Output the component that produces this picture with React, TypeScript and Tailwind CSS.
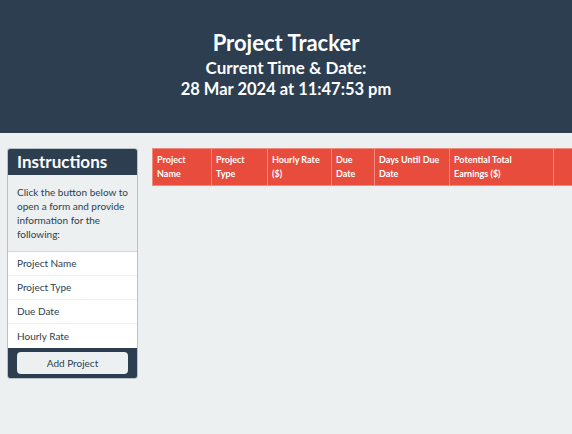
import React from "react";

const columns = [
  { lines: ["Project", "Name"], w: "w-[59px]" },
  { lines: ["Project", "Type"], w: "w-[56px]" },
  { lines: ["Hourly Rate", "($)"], w: "w-[64px]" },
  { lines: ["Due", "Date"], w: "w-[43px]" },
  { lines: ["Days Until Due", "Date"], w: "w-[75px]" },
  { lines: ["Potential Total", "Earnings ($)"], w: "w-[104px]" },
  { lines: [], w: "w-[60px]" },
];

const fields = ["Project Name", "Project Type", "Due Date", "Hourly Rate"];

export default function App() {
  return (
    <div
      className="min-h-[434px] bg-[#ecf0f1] text-[#2c3e50]"
      style={{ fontFamily: "Lato, 'Open Sans', sans-serif" }}
    >
      {/* Header */}
      <header className="flex h-[133px] flex-col items-center justify-center bg-[#2c3e50] pb-[5px] text-white">
        <h1 className="text-[22px] font-bold leading-[28px]">Project Tracker</h1>
        <p className="text-[17px] font-bold leading-[21px]">Current Time &amp; Date:</p>
        <p className="text-[16.5px] font-bold leading-[22px]">28 Mar 2024 at 11:47:53 pm</p>
      </header>

      <main className="flex items-start gap-[14px] pl-[7px] pt-[15px]">
        {/* Instructions card */}
        <aside className="w-[131px] shrink-0 overflow-hidden rounded-[3px] border border-[#b8c2c9] bg-white">
          <div className="flex h-[26px] items-center bg-[#2c3e50] px-[9px] text-[17px] font-bold text-white">
            Instructions
          </div>
          <div className="h-[77px] border-b border-[#d3d9dd] bg-[#ecf0f1] px-[9px] pt-[10px] text-[10px] leading-[14px] text-[#2c3e50]">
            Click the button below to open a form and provide information for the following:
          </div>
          <ul>
            {fields.map((f) => (
              <li
                key={f}
                className="flex h-[24px] items-center border-b border-[#ecf0f1] px-[9px] text-[10px] text-[#2c3e50] last:border-b-0"
              >
                {f}
              </li>
            ))}
          </ul>
          <div className="flex h-[30px] items-center bg-[#2c3e50] px-[9px]">
            <button className="h-[22px] w-full rounded-[4px] bg-[#ecf0f1] text-[10px] text-[#2c3e50]">
              Add Project
            </button>
          </div>
        </aside>

        {/* Table */}
        <div className="min-w-0 flex-1 overflow-hidden">
          <table className="w-[461px] table-fixed border-collapse">
            <thead>
              <tr className="bg-[#e74c3c]">
                {columns.map((c, i) => (
                  <th
                    key={i}
                    className={`${c.w} h-[37px] border border-[#f08a7f] px-[4px] py-[4px] text-left align-top text-[9px] font-bold leading-[14px] text-white`}
                  >
                    {c.lines.map((l) => (
                      <span key={l} className="block whitespace-nowrap">
                        {l}
                      </span>
                    ))}
                  </th>
                ))}
              </tr>
            </thead>
          </table>
        </div>
      </main>
    </div>
  );
}
